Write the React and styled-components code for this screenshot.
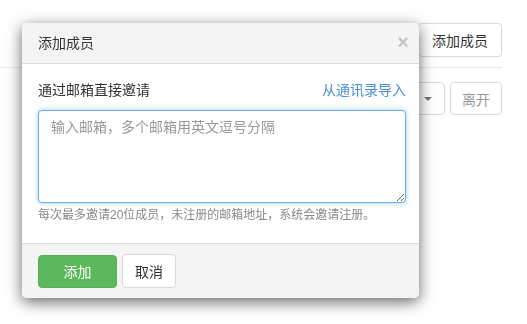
import React from 'react';
import styled, { createGlobalStyle } from 'styled-components';

const GlobalStyle = createGlobalStyle`
  html, body {
    margin: 0;
    padding: 0;
    background: #fff;
    font-family: "Liberation Sans", "Noto Sans CJK SC", sans-serif;
    font-size: 14px;
    color: #333;
  }
`;

const Page = styled.div`
  width: 527px;
  height: 324px;
  padding: 23px 25px 0 0;
  box-sizing: border-box;
  overflow: hidden;
`;

const TopBar = styled.div`
  display: flex;
  justify-content: flex-end;
`;

const Divider = styled.div`
  margin-top: 10px;
  border-top: 1px solid #e8e8e8;
`;

const ActionRow = styled.div`
  display: flex;
  justify-content: flex-end;
  gap: 5px;
  margin-top: 14px;
`;

const GhostButton = styled.button`
  display: flex;
  align-items: center;
  gap: 6px;
  height: ${p => p.$h || 34}px;
  padding: 0 ${p => p.$px || 12}px;
  border: 1px solid #d9d9d9;
  border-radius: 4px;
  background: #fff;
  font: inherit;
  font-size: 14px;
  color: ${p => (p.$muted ? '#999' : '#333')};
`;

const Caret = styled.span`
  width: 0;
  height: 0;
  border-left: 4px solid transparent;
  border-right: 4px solid transparent;
  border-top: 4px solid #777;
`;

const Modal = styled.div`
  position: fixed;
  left: 22px;
  top: 23px;
  width: 397px;
  background: #fff;
  border-radius: 5px;
  box-shadow: 0 4px 15px rgba(0, 0, 0, 0.6);
  overflow: hidden;
`;

const Header = styled.div`
  display: flex;
  align-items: center;
  justify-content: space-between;
  height: 40px;
  padding: 0 10px 0 16px;
  background: #f4f4f4;
  border-bottom: 1px solid #dcdcdc;
`;

const Title = styled.div`
  font-size: 14px;
  line-height: 20px;
  color: #333;
`;

const Close = styled.span`
  font-size: 20px;
  font-weight: bold;
  line-height: 20px;
  color: #c4c4c4;
  margin-top: -3px;
`;

const Body = styled.div`
  padding: 16px 13px 19px 16px;
`;

const LabelRow = styled.div`
  display: flex;
  justify-content: space-between;
  line-height: 20px;
  font-size: 14px;
`;

const Link = styled.a`
  color: #4a8fd6;
  text-decoration: none;
`;

const EmailInput = styled.textarea`
  display: block;
  width: 100%;
  height: 93px;
  margin-top: 10px;
  box-sizing: border-box;
  padding: 6px 12px;
  font: inherit;
  font-size: 14px;
  line-height: 20px;
  border: 1px solid #66afe9;
  border-radius: 4px;
  box-shadow: 0 0 5px rgba(102, 175, 233, 0.6);
  outline: none;
  &::placeholder {
    color: #999;
  }
`;

const Help = styled.div`
  margin-top: 3px;
  font-size: 12px;
  line-height: 18px;
  color: #888;
  white-space: nowrap;
`;

const Footer = styled.div`
  display: flex;
  align-items: center;
  gap: 5px;
  padding: 10px 16px;
  background: #f4f4f4;
  border-top: 1px solid #dcdcdc;
`;

const PrimaryButton = styled.button`
  width: 79px;
  height: 33px;
  border: 1px solid #52b152;
  border-radius: 4px;
  background: #5cb85c;
  color: #fff;
  font: inherit;
  font-size: 14px;
`;

export default function App() {
  return (
    <>
      <GlobalStyle />
      <Page>
        <TopBar>
          <GhostButton $px={13}>添加成员</GhostButton>
        </TopBar>
        <Divider />
        <ActionRow>
          <GhostButton $h={33}>
            员 <Caret />
          </GhostButton>
          <GhostButton $h={33} $px={11} $muted>离开</GhostButton>
        </ActionRow>
      </Page>

      <Modal>
        <Header>
          <Title>添加成员</Title>
          <Close>×</Close>
        </Header>
        <Body>
          <LabelRow>
            <span>通过邮箱直接邀请</span>
            <Link href="#">从通讯录导入</Link>
          </LabelRow>
          <EmailInput placeholder="输入邮箱，多个邮箱用英文逗号分隔" />
          <Help>每次最多邀请20位成员，未注册的邮箱地址，系统会邀请注册。</Help>
        </Body>
        <Footer>
          <PrimaryButton>添加</PrimaryButton>
          <GhostButton $px={12}>取消</GhostButton>
        </Footer>
      </Modal>
    </>
  );
}
